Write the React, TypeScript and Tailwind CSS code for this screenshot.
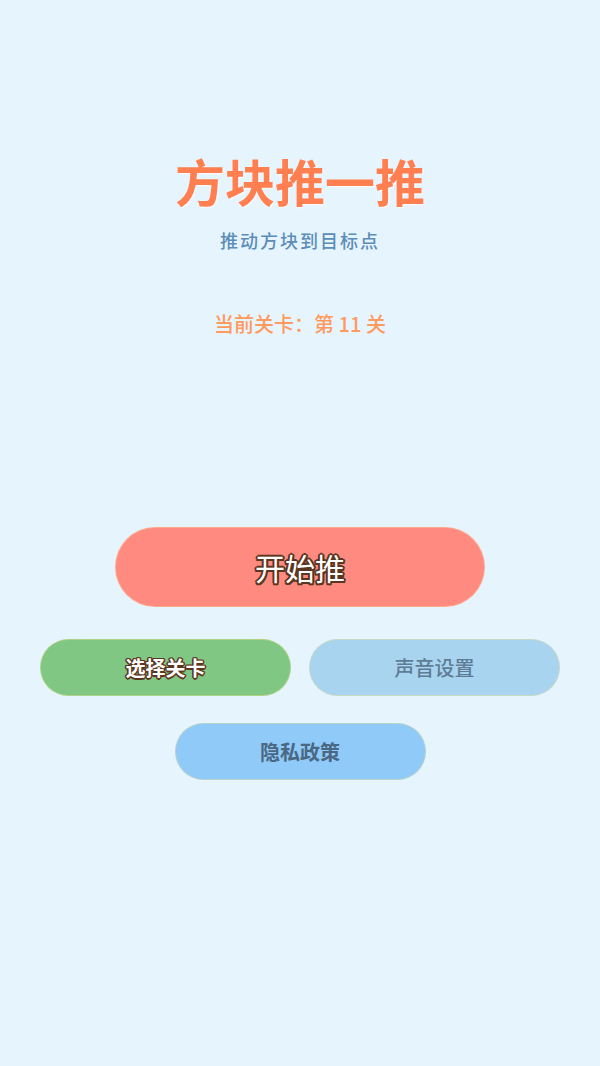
import React from "react";

const font = { fontFamily: '"Noto Sans CJK SC", "Noto Sans", sans-serif' };

export default function App() {
  return (
    <div
      className="w-[600px] h-[1066px] bg-[#e6f4fe] flex flex-col items-center"
      style={font}
    >
      <h1 className="mt-[155px] h-[50px] leading-[50px] text-[50px] font-bold text-[#ff7f50] [text-shadow:1px_1px_2px_rgba(255,255,255,0.9)]">
        方块推一推
      </h1>
      <p className="mt-[22px] h-[26px] leading-[26px] text-[18px] tracking-[2px] text-[#5b8db8] font-medium">
        推动方块到目标点
      </p>
      <p className="mt-[57px] h-[28px] leading-[28px] text-[20px] text-[#ff9a5e] font-medium">
        当前关卡：第 11 关
      </p>

      <button className="mt-[189px] w-[370px] h-[80px] rounded-full bg-[#ff8a80] border border-[#ffd9a0]/40 flex items-center justify-center">
        <span className="text-[30px] text-white [text-shadow:2px_0_0_#5a3520,-2px_0_0_#5a3520,0_2px_0_#5a3520,0_-2px_0_#5a3520,1.5px_1.5px_0_#5a3520,-1.5px_1.5px_0_#5a3520,1.5px_-1.5px_0_#5a3520,-1.5px_-1.5px_0_#5a3520]">
          开始推
        </span>
      </button>

      <div className="mt-[32px] flex gap-[18px]">
        <button className="w-[251px] h-[57px] rounded-full bg-[#81c784] border border-[#f2e08a]/40 flex items-center justify-center">
          <span className="text-[20px] font-bold text-white [text-shadow:1.5px_0_0_#5a3520,-1.5px_0_0_#5a3520,0_1.5px_0_#5a3520,0_-1.5px_0_#5a3520,1px_1px_0_#5a3520,-1px_1px_0_#5a3520,1px_-1px_0_#5a3520,-1px_-1px_0_#5a3520]">
            选择关卡
          </span>
        </button>
        <button className="w-[251px] h-[57px] rounded-full bg-[#a8d4f0] border border-[#f2e08a]/40 flex items-center justify-center">
          <span className="text-[20px] font-medium text-[#5e7c94]">声音设置</span>
        </button>
      </div>

      <button className="mt-[27px] w-[251px] h-[57px] rounded-full bg-[#90caf9] border border-[#f2e08a]/40 flex items-center justify-center">
        <span className="text-[20px] font-bold text-[#4a6783]">隐私政策</span>
      </button>
    </div>
  );
}
